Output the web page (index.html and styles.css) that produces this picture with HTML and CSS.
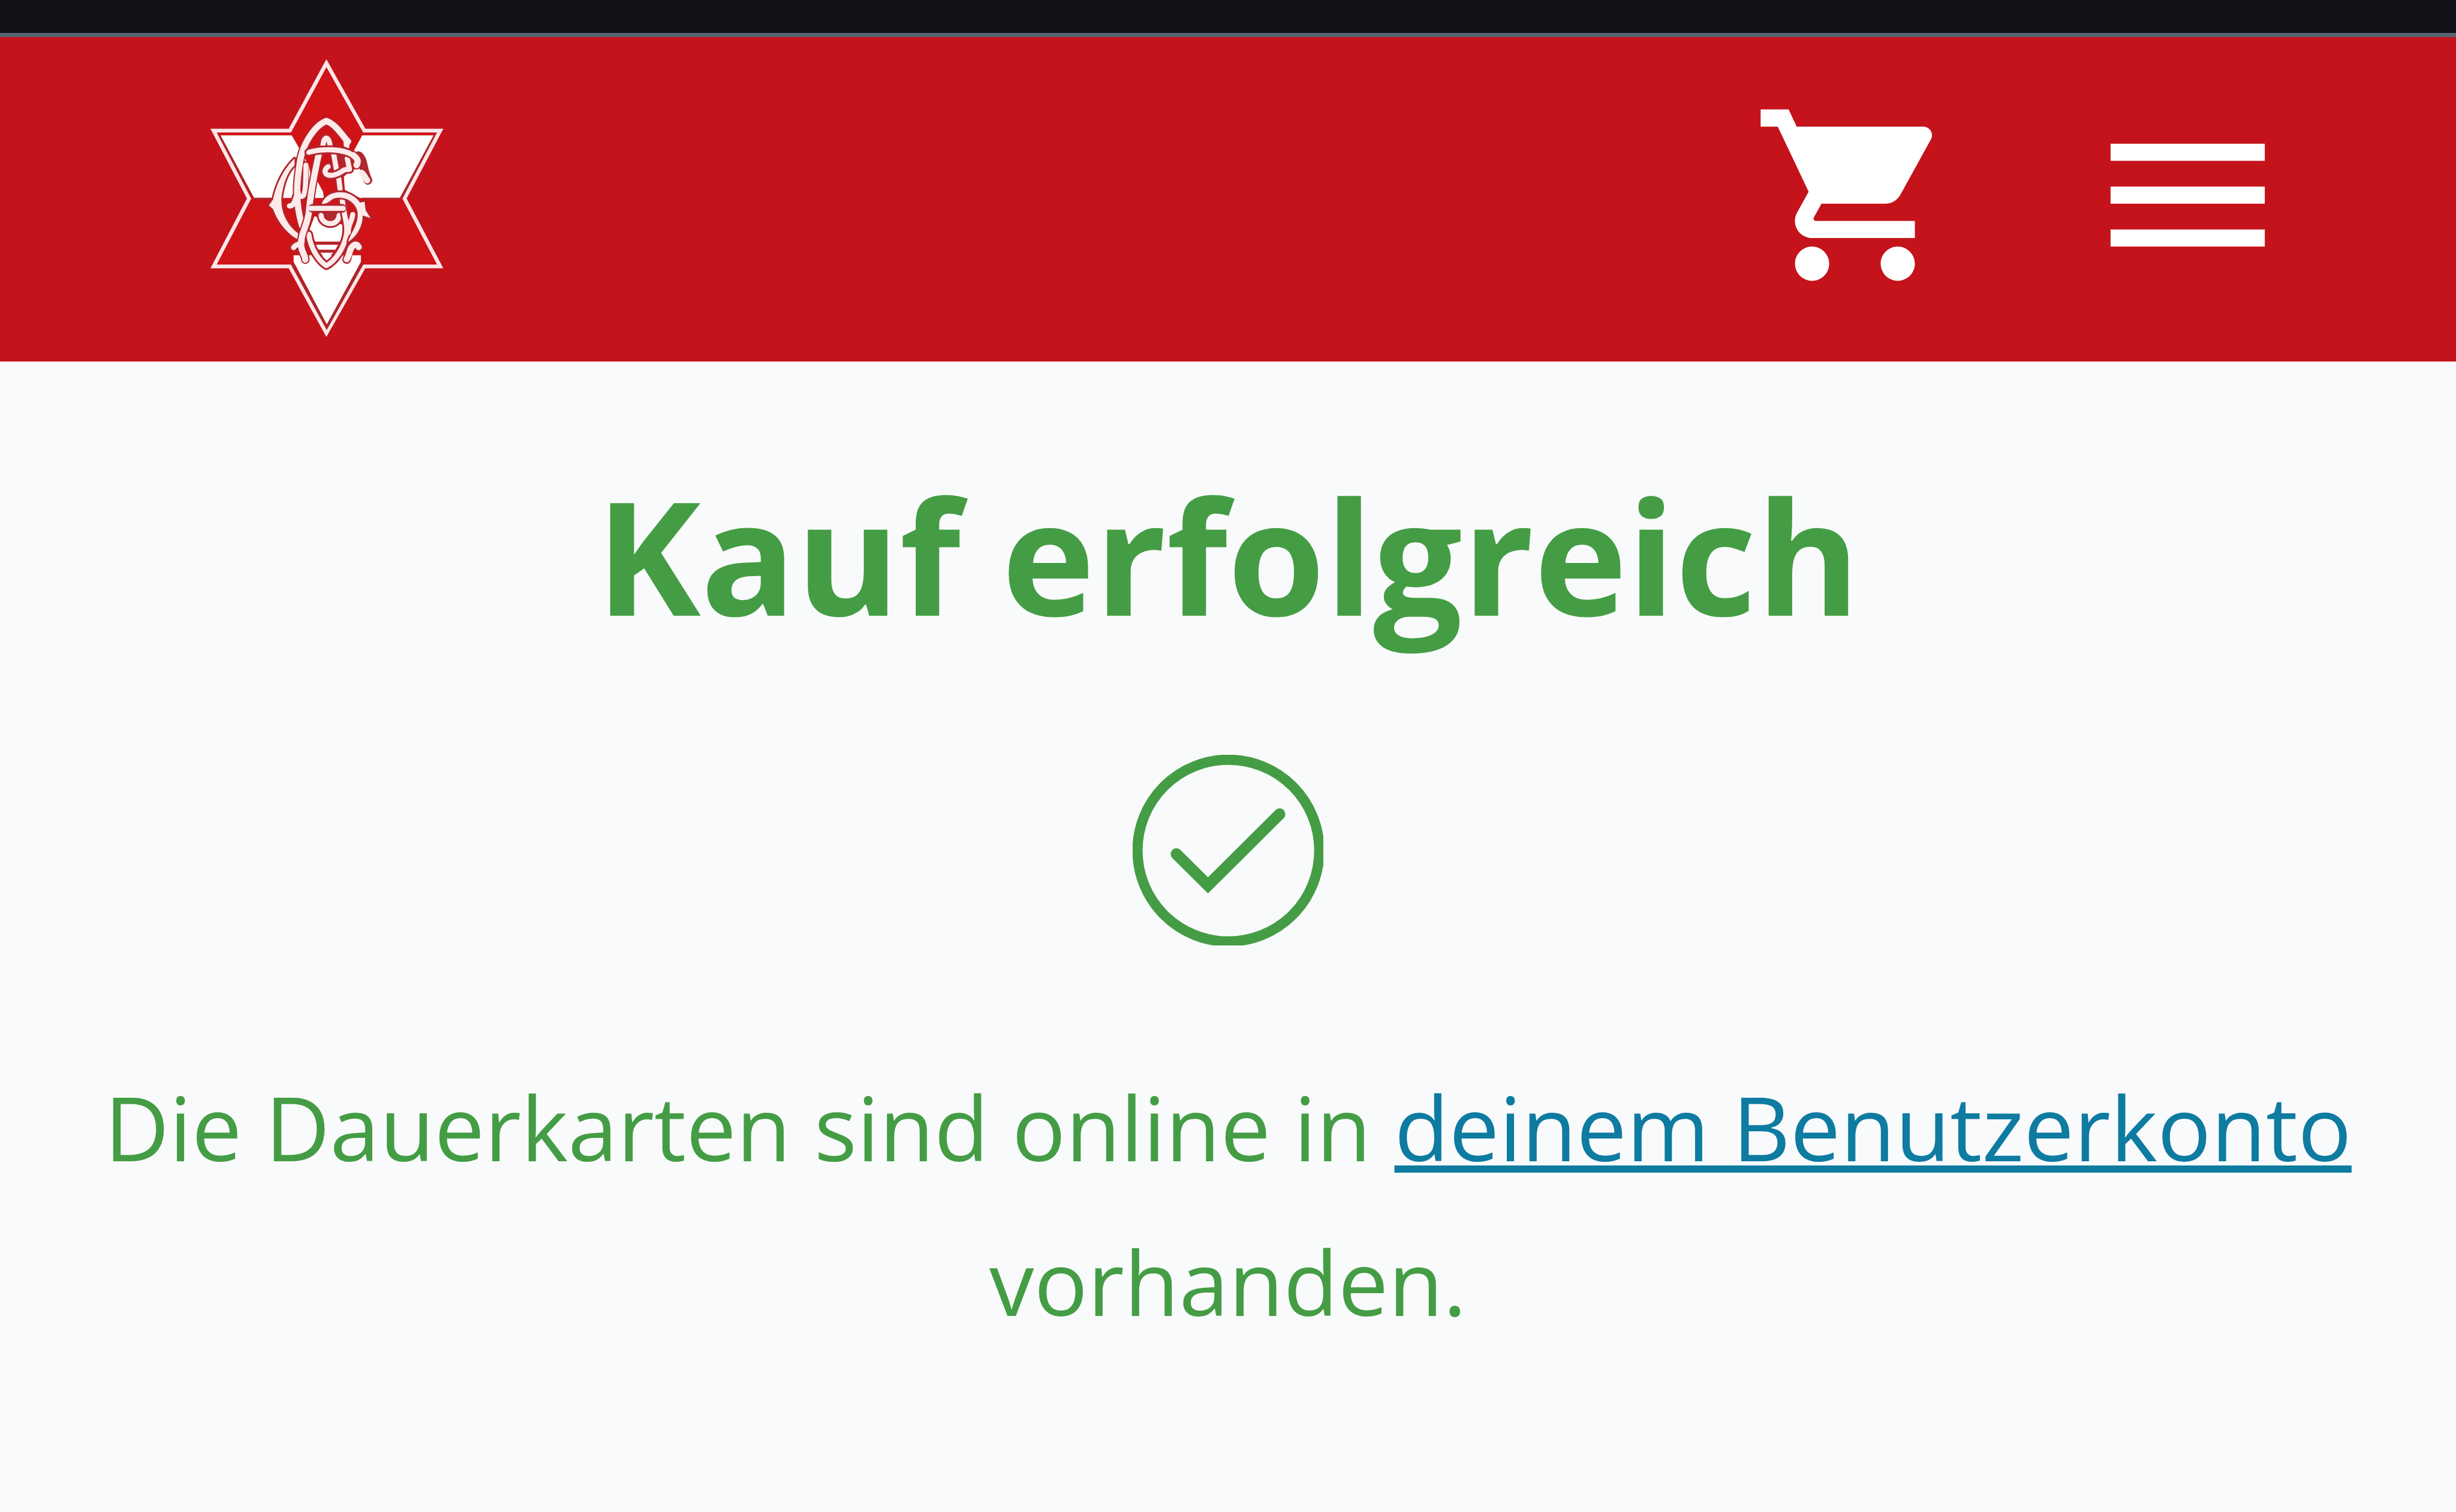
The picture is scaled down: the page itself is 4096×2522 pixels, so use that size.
FILE: index.html
```html
<!DOCTYPE html>
<html lang="de">
<head>
<meta charset="utf-8">
<meta name="viewport" content="width=device-width, initial-scale=1">
<title>Kauf erfolgreich</title>
<link rel="stylesheet" href="styles.css">
</head>
<body>
<div class="status-strip"></div>
<header class="header">
  <a class="logo" href="#" aria-label="Startseite">
    <svg class="logo-image" viewBox="62 45 1226 1458" aria-hidden="true">
      <path class="star" d="M673 62 873 418H1273L1085 776 1273 1134H872L673 1486 480 1134H78L265 776 78 418H480Z"/>
      <!-- white fields -->
      <path class="edge" d="M108 437 283 765M1242 437 1072 765M492 1120 675 1455 862 1120"/>
      <path class="field" d="M115 443H490L535 520 590 620 655 740 660 773H292ZM862 443H1238L1060 773H850L770 730 765 660 810 620 820 520ZM500 1075H855V1110L675 1440 500 1110ZM610 870 760 915 752 1003H615L580 950Z"/>
      <path class="shade" d="M575 570 632 560 600 690 588 640ZM630 560H745V740L690 745 655 735 625 680Z"/>
      <path class="line" d="M280 776H385M860 776H1075"/>
      <path class="field" d="M615 1020H735L720 1046H632ZM640 1062H710L673 1094Z"/>
      <path class="line" d="M600 1012H750M615 1054H735"/>
      <!-- monogram -->
      <path class="glyph-out" d="M505 565C440 625 405 715 392 780L370 812 392 832C415 900 470 965 520 990L524 960C470 920 430 850 436 770 445 700 465 640 505 600Z"/>
      <path class="glyph" d="M505 565C440 625 405 715 392 780L370 812 392 832C415 900 470 965 520 990L524 960C470 920 430 850 436 770 445 700 465 640 505 600Z"/>
      <path class="out" d="M645 865C650 922 735 924 740 865M688 855C692 880 713 878 712 852"/>
      <path class="thin" d="M645 865C650 922 735 924 740 865"/>
      <path class="line" d="M682 850C686 886 714 890 712 850"/>
      <path class="out" d="M655 495C660 445 685 445 692 495M712 545 728 635M738 668 745 725M755 770 785 915M752 545C770 560 760 590 800 612"/>
      <path class="thin" d="M655 495C660 445 685 445 692 495M712 545 728 635M738 668 745 725"/>
      <path class="out" d="M682 608C655 625 660 662 712 652 765 640 750 620 795 622L783 565"/>
      <path class="thin" d="M682 608C655 625 660 662 712 652 765 640 750 620 795 622L783 565"/>
      <path class="out" d="M580 965C592 1050 640 1110 673 1130 722 1105 765 1035 778 970 790 910 760 860 756 770"/>
      <path class="thin" d="M580 965C592 1050 640 1110 673 1130 722 1105 765 1035 778 970 790 910 760 860 756 770"/>
      <path class="glyph-out" d="M648 805C665 750 735 730 790 750 820 763 840 780 850 798L874 793 880 838 905 878 864 866C865 920 835 975 788 1005 798 960 842 920 838 850 828 790 765 762 715 775 690 785 685 805 648 805Z"/>
      <path class="glyph" d="M648 805C665 750 735 730 790 750 820 763 840 780 850 798L874 793 880 838 905 878 864 866C865 920 835 975 788 1005 798 960 842 920 838 850 828 790 765 762 715 775 690 785 685 805 648 805Z"/>
      <path class="thin" d="M812 860C808 900 788 910 788 955"/>
      <path class="out" d="M787 475C760 450 725 385 673 367 610 390 548 490 534 580 518 680 505 790 545 920M485 812C510 815 505 770 525 745M540 765C560 765 558 740 558 600"/>
      <path class="thick" d="M787 475C760 450 725 385 673 367 610 390 548 490 534 580 518 680 505 790 545 920"/>
      <path class="glyph" d="M760 450 785 465 804 468 795 490 792 520 765 500Z"/>
      <path class="thin" d="M478 815C510 815 505 770 525 745M540 765C560 765 565 740 565 600"/>
      <path class="out" d="M632 545C600 690 588 760 580 850 570 930 535 960 540 1030 545 1060 560 1075 562 1098M500 1035C510 1015 530 1025 545 1000"/>
      <path class="thick" d="M632 545C600 690 588 760 580 850 570 930 535 960 540 1030 545 1060 560 1075 562 1098"/>
      <path class="thin" d="M500 1035C510 1015 530 1025 545 1000"/>
      <path class="out" d="M846 1035C830 1005 800 1025 790 1060 785 1080 785 1090 780 1098"/>
      <path class="thick" d="M843 1032C830 1005 803 1025 795 1060 790 1080 785 1090 780 1096"/>
      <path class="out" d="M600 828H756"/>
      <path class="thin" d="M590 828H762"/>
      <path class="out" d="M580 532C650 512 760 512 815 548 838 565 840 585 832 600M842 550C872 570 862 620 892 680"/>
      <path class="thick" d="M832 600C844 580 838 565 815 548M858 640C875 650 870 660 888 680"/>
      <path class="thin" d="M580 532C650 512 760 512 815 548 838 565 840 585 832 600"/>
    </svg>
  </a>
  <div class="actions">
    <button class="icon-button" type="button" aria-label="Warenkorb">
      <svg class="icon" viewBox="0 0 24 24" aria-hidden="true"><path d="M7 18c-1.1 0-1.990.9-1.990 2S5.900 22 7 22s2-.9 2-2-.9-2-2-2zM1 2v2h2l3.600 7.590-1.350 2.450c-.16.28-.25.61-.25.96 0 1.100.9 2 2 2h12v-2H7.420c-.14 0-.25-.11-.25-.25l.03-.12.9-1.630h7.450c.75 0 1.410-.41 1.750-1.030l3.580-6.490c.08-.14.12-.31.12-.48 0-.55-.45-1-1-1H5.210l-.94-2H1zm16 16c-1.100 0-1.990.9-1.990 2s.89 2 1.990 2 2-.9 2-2-.9-2-2-2z"/></svg>
    </button>
    <button class="icon-button" type="button" aria-label="Menü">
      <svg class="icon" viewBox="0 0 24 24" aria-hidden="true"><path d="M3 18h18v-2H3v2zm0-5h18v-2H3v2zm0-7v2h18V6H3z"/></svg>
    </button>
  </div>
</header>
<main class="content">
  <h1 class="title">Kauf erfolgreich</h1>
  <svg class="check" viewBox="96 82 1008 1009" aria-hidden="true">
    <circle cx="602" cy="589" r="481"/>
    <path class="check-mark" d="M327 607 494 773 873 396"/>
  </svg>
  <p class="message">Die Dauerkarten sind online in <a class="link" href="#">deinem Benutzerkonto</a> vorhanden.</p>
</main>
</body>
</html>
```
FILE: styles.css
```css
* {
  box-sizing: border-box;
}

body {
  margin: 0;
  background: #f9fafc;
  color: #449d44;
  font-family: "Open Sans", "Noto Sans", sans-serif;
}

.status-strip {
  height: 62px;
  background: #121318;
  border-bottom: 7px solid #566472;
}

.header {
  display: flex;
  align-items: center;
  justify-content: space-between;
  padding: 38px 276px 42px 351px;
  background: #c4131b;
}

.logo,
.logo-image {
  display: block;
  width: 388px;
  height: 461px;
}

.logo-image {
  overflow: visible;
}

.star {
  fill: #cf1317;
  stroke: #fde6e9;
  stroke-width: 20;
}

.field {
  fill: #fff;
}

.shade {
  fill: #cf1317;
}

.edge {
  fill: none;
  stroke: #a8282a;
  stroke-width: 14;
}

.line {
  fill: none;
  stroke: #ab2c35;
  stroke-width: 9;
}

.out,
.thin,
.thick {
  fill: none;
  stroke: #fdeaea;
  stroke-linecap: round;
  stroke-linejoin: round;
}

.out {
  stroke: #b0262e;
  stroke-width: 46;
}

.thin {
  stroke-width: 27;
}

.thick {
  stroke-width: 33;
}

.glyph {
  fill: #fdeaea;
}

.glyph-out {
  fill: #b0262e;
  stroke: #b0262e;
  stroke-width: 18;
  stroke-linejoin: round;
}

.actions {
  display: flex;
  gap: 212px;
  padding-bottom: 10px;
}

.icon-button {
  padding: 0;
  border: 0;
  background: none;
  color: #fff;
  cursor: pointer;
}

.icon {
  display: block;
  width: 343px;
  height: 343px;
  fill: currentColor;
}

.content {
  display: flex;
  flex-direction: column;
  align-items: center;
  padding: 122px 160px;
  text-align: center;
}

.title {
  margin: 0;
  font-size: 263px;
  font-weight: 700;
  line-height: 400px;
}

.check {
  width: 318px;
  height: 318px;
  margin: 134px 0 174px;
  fill: none;
  stroke: currentColor;
  stroke-width: 54;
}

.check-mark {
  stroke-width: 61;
  stroke-linecap: round;
}

.message {
  margin: 0;
  font-size: 149px;
  line-height: 258px;
}

.link {
  color: #0e7ba1;
  text-decoration-thickness: 12px;
  text-underline-offset: 7px;
  text-decoration-skip-ink: none;
}
```
